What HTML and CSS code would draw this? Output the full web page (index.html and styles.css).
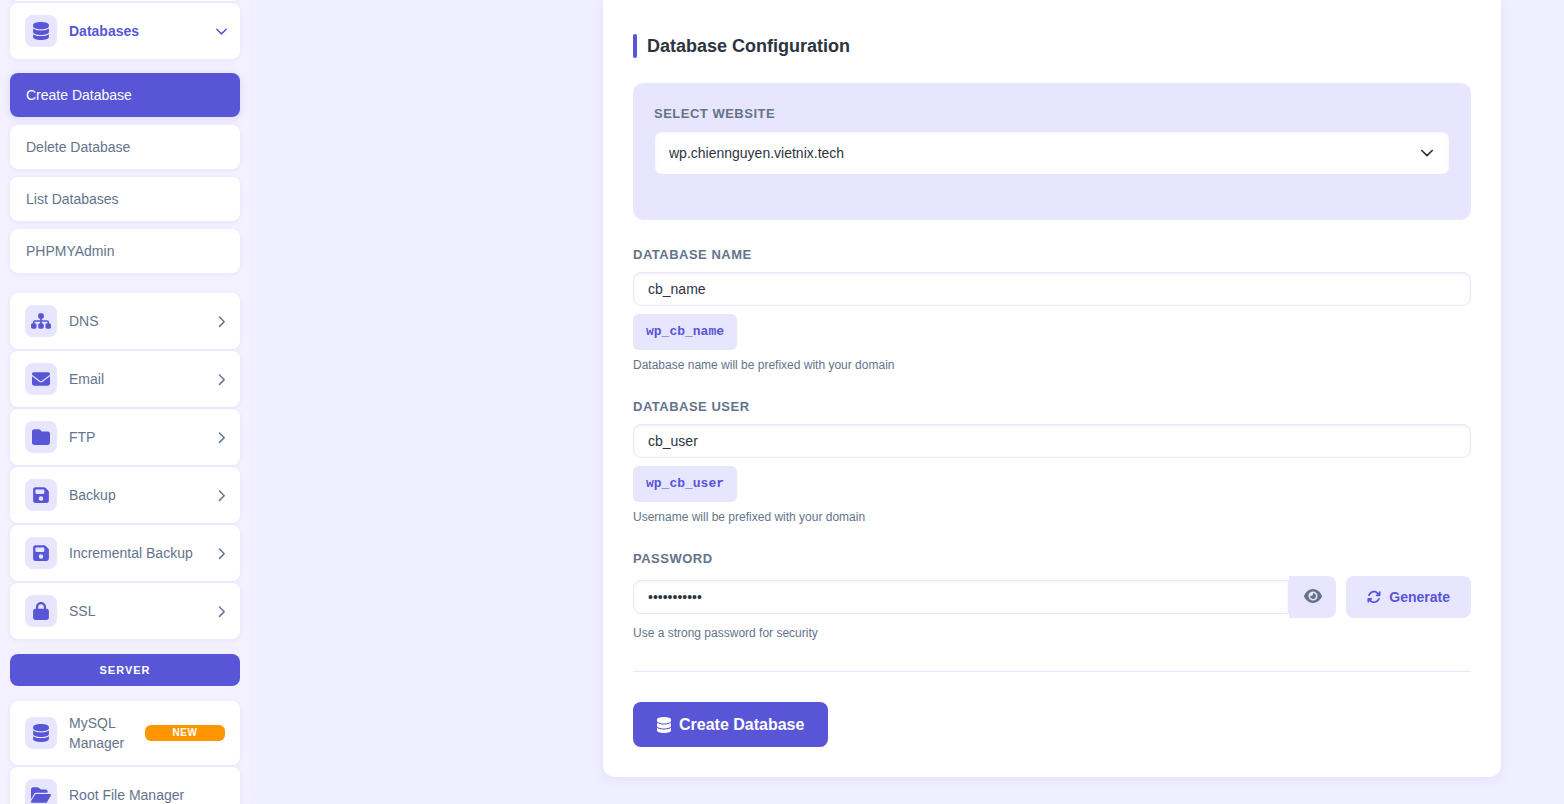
FILE: index.html
```html
<!DOCTYPE html>
<html lang="en">
<head>
<meta charset="utf-8">
<title>Create Database</title>
<link rel="stylesheet" href="styles.css">
</head>
<body>
<svg class="sprite" aria-hidden="true">
  <symbol id="database" viewBox="0 0 448 512"><path d="M448 80v48c0 44.200-100.300 80-224 80S0 172.200 0 128V80C0 35.800 100.300 0 224 0S448 35.800 448 80zM393.200 214.700c20.800-7.400 39.900-16.900 54.800-28.600V288c0 44.200-100.300 80-224 80S0 332.200 0 288V186.100c14.900 11.800 34 21.200 54.800 28.600C99.700 230.700 159.500 240 224 240s124.300-9.300 169.200-25.300zM0 346.100c14.900 11.800 34 21.200 54.800 28.600C99.700 390.700 159.500 400 224 400s124.300-9.300 169.200-25.300c20.800-7.400 39.900-16.900 54.800-28.600V432c0 44.200-100.300 80-224 80S0 476.200 0 432V346.100z"/></symbol>
  <symbol id="sitemap" viewBox="0 0 576 512"><path d="M208 80c0-26.500 21.500-48 48-48h64c26.500 0 48 21.500 48 48v64c0 26.500-21.500 48-48 48h-8v40H464c30.900 0 56 25.100 56 56v32h8c26.500 0 48 21.500 48 48v64c0 26.500-21.500 48-48 48H464c-26.500 0-48-21.500-48-48V368c0-26.500 21.500-48 48-48h8V288c0-4.400-3.600-8-8-8H312v40h8c26.500 0 48 21.500 48 48v64c0 26.500-21.500 48-48 48H256c-26.500 0-48-21.500-48-48V368c0-26.500 21.500-48 48-48h8V280H112c-4.400 0-8 3.600-8 8v32h8c26.500 0 48 21.500 48 48v64c0 26.500-21.500 48-48 48H48c-26.500 0-48-21.500-48-48V368c0-26.500 21.500-48 48-48h8V288c0-30.900 25.100-56 56-56H264V192h-8c-26.500 0-48-21.500-48-48V80z"/></symbol>
  <symbol id="envelope" viewBox="0 0 512 512"><path d="M48 64C21.500 64 0 85.500 0 112c0 15.100 7.100 29.300 19.200 38.400L236.800 313.600c11.400 8.500 27 8.500 38.400 0L492.800 150.400c12.100-9.100 19.200-23.300 19.200-38.400c0-26.500-21.500-48-48-48H48zM0 176V384c0 35.300 28.700 64 64 64H448c35.300 0 64-28.700 64-64V176L294.400 339.200c-22.800 17.100-54 17.100-76.800 0L0 176z"/></symbol>
  <symbol id="folder" viewBox="0 0 512 512"><path d="M64 480H448c35.300 0 64-28.700 64-64V160c0-35.300-28.700-64-64-64H288c-10.100 0-19.600-4.700-25.600-12.800L243.200 57.600C231.100 41.500 212.100 32 192 32H64C28.700 32 0 60.700 0 96V416c0 35.300 28.700 64 64 64z"/></symbol>
  <symbol id="floppy" viewBox="0 0 448 512"><path d="M64 32C28.700 32 0 60.700 0 96V416c0 35.300 28.700 64 64 64H384c35.300 0 64-28.700 64-64V173.300c0-17-6.700-33.300-18.700-45.300L352 50.700C340 38.700 323.700 32 306.700 32H64zm0 96c0-17.700 14.300-32 32-32H288c17.700 0 32 14.300 32 32v64c0 17.700-14.300 32-32 32H96c-17.700 0-32-14.300-32-32V128zM224 288a64 64 0 1 1 0 128 64 64 0 1 1 0-128z"/></symbol>
  <symbol id="lock" viewBox="0 0 448 512"><path d="M144 144v48H304V144c0-44.200-35.800-80-80-80s-80 35.800-80 80zM80 192V144C80 64.500 144.500 0 224 0s144 64.500 144 144v48h16c35.300 0 64 28.700 64 64V448c0 35.300-28.700 64-64 64H64c-35.300 0-64-28.700-64-64V256c0-35.300 28.700-64 64-64H80z"/></symbol>
  <symbol id="folder-open" viewBox="0 0 576 512"><path d="M88.700 223.800L0 375.800V96C0 60.700 28.700 32 64 32H181.500c17 0 33.300 6.700 45.300 18.700l26.500 26.500c12 12 28.300 18.700 45.300 18.700H416c35.300 0 64 28.700 64 64v32H144c-22.800 0-43.800 12.100-55.300 31.800zm27.600 16.100C122.100 230 132.600 224 144 224H544c11.500 0 22 6.100 27.700 16.100s5.700 22.200-.1 32.100l-112 192C453.900 474 443.400 480 432 480H32c-11.500 0-22-6.100-27.700-16.100s-5.700-22.200 .1-32.100l112-192z"/></symbol>
  <symbol id="eye" viewBox="0 0 576 512"><path d="M288 32c-80.800 0-145.500 36.800-192.600 80.600C48.600 156 17.300 208 2.500 243.700c-3.300 7.900-3.300 16.700 0 24.600C17.300 304 48.600 356 95.400 399.400C142.500 443.200 207.200 480 288 480s145.500-36.800 192.600-80.600c46.800-43.500 78.100-95.400 93-131.100c3.300-7.900 3.300-16.700 0-24.600c-14.900-35.700-46.200-87.700-93-131.100C433.500 68.800 368.800 32 288 32zM144 256a144 144 0 1 1 288 0 144 144 0 1 1 -288 0zm144-64c0 35.300-28.700 64-64 64c-7.100 0-13.900-1.200-20.300-3.300c-5.500-1.800-11.900 1.600-11.700 7.400c.3 6.900 1.300 13.800 3.200 20.700c13.700 51.200 66.400 81.600 117.600 67.900s81.600-66.400 67.900-117.600c-11.100-41.500-47.800-69.400-88.600-71.100c-5.800-.2-9.200 6.100-7.400 11.700c2.100 6.400 3.300 13.200 3.300 20.300z"/></symbol>
  <symbol id="rotate" viewBox="0 0 512 512"><path d="M105.100 202.600c7.700-21.800 20.200-42.300 37.800-59.800c62.500-62.500 163.800-62.500 226.300 0L386.300 160H352c-17.700 0-32 14.300-32 32s14.300 32 32 32H463.500c0 0 0 0 0 0h.4c17.700 0 32-14.300 32-32V80c0-17.700-14.300-32-32-32s-32 14.300-32 32v35.200L414.400 97.600c-87.500-87.500-229.300-87.500-316.800 0C73.200 122 55.600 150.700 44.800 181.400c-5.900 16.700 2.900 34.900 19.500 40.800s34.900-2.900 40.800-19.500zM39 289.300c-5 1.500-9.800 4.200-13.700 8.200c-4 4-6.700 8.800-8.100 14c-.3 1.200-.6 2.500-.8 3.800c-.3 1.700-.4 3.400-.4 5.100V432c0 17.700 14.300 32 32 32s32-14.300 32-32V396.900l17.600 17.500c87.500 87.400 229.300 87.400 316.700 0c24.400-24.400 42.100-53.100 52.900-83.700c5.900-16.700-2.900-34.900-19.500-40.800s-34.900 2.900-40.800 19.500c-7.700 21.800-20.200 42.300-37.800 59.800c-62.500 62.500-163.800 62.500-226.300 0l-.1-.1L125.600 352H160c17.700 0 32-14.300 32-32s-14.300-32-32-32H48.400c-1.600 0-3.200 .1-4.800 .3s-3.100 .5-4.600 1z"/></symbol>
  <symbol id="chevron-right" viewBox="0 0 16 16"><path d="M6.500 4l4.700 4.700-4.700 4.700" fill="none" stroke="currentColor" stroke-width="1.500" stroke-linecap="round" stroke-linejoin="round"/></symbol>
  <symbol id="chevron-down" viewBox="0 0 16 16"><path d="M3.800 6.200l4.700 4.700 4.700-4.700" fill="none" stroke="currentColor" stroke-width="1.500" stroke-linecap="round" stroke-linejoin="round"/></symbol>
  <symbol id="select-chevron" viewBox="0 0 16 16"><path d="M2.800 5.500l5.200 5.200 5.200-5.200" fill="none" stroke="currentColor" stroke-width="1.700" stroke-linecap="round" stroke-linejoin="round"/></symbol>
</svg>

<div class="layout">
  <aside class="sidebar">
    <nav class="menu">
      <div class="item"></div>
      <a class="item item-open" href="#"><span class="icon-box"><svg class="icon"><use href="#database"/></svg></span><span class="item-text">Databases</span><svg class="chevron"><use href="#chevron-down"/></svg></a>
      <div class="submenu">
        <a class="sub active" href="#">Create Database</a>
        <a class="sub" href="#">Delete Database</a>
        <a class="sub" href="#">List Databases</a>
        <a class="sub" href="#">PHPMYAdmin</a>
      </div>
      <a class="item" href="#"><span class="icon-box"><svg class="icon"><use href="#sitemap"/></svg></span><span class="item-text">DNS</span><svg class="chevron"><use href="#chevron-right"/></svg></a>
      <a class="item" href="#"><span class="icon-box"><svg class="icon"><use href="#envelope"/></svg></span><span class="item-text">Email</span><svg class="chevron"><use href="#chevron-right"/></svg></a>
      <a class="item" href="#"><span class="icon-box"><svg class="icon"><use href="#folder"/></svg></span><span class="item-text">FTP</span><svg class="chevron"><use href="#chevron-right"/></svg></a>
      <a class="item" href="#"><span class="icon-box"><svg class="icon"><use href="#floppy"/></svg></span><span class="item-text">Backup</span><svg class="chevron"><use href="#chevron-right"/></svg></a>
      <a class="item" href="#"><span class="icon-box"><svg class="icon"><use href="#floppy"/></svg></span><span class="item-text">Incremental Backup</span><svg class="chevron"><use href="#chevron-right"/></svg></a>
      <a class="item" href="#"><span class="icon-box"><svg class="icon"><use href="#lock"/></svg></span><span class="item-text">SSL</span><svg class="chevron"><use href="#chevron-right"/></svg></a>
      <div class="menu-title">Server</div>
      <a class="item" href="#"><span class="icon-box"><svg class="icon"><use href="#database"/></svg></span><span class="item-text">MySQL Manager</span><span class="badge">NEW</span></a>
      <a class="item" href="#"><span class="icon-box"><svg class="icon"><use href="#folder-open"/></svg></span><span class="item-text">Root File Manager</span></a>
    </nav>
  </aside>

  <main class="main">
    <form class="card">
      <h2 class="heading">Database Configuration</h2>

      <div class="site-box">
        <label class="label" for="site">Select Website</label>
        <div class="select-wrap">
          <select class="field select" id="site"><option>wp.chiennguyen.vietnix.tech</option></select>
          <svg class="select-arrow"><use href="#select-chevron"/></svg>
        </div>
      </div>

      <div class="group">
        <label class="label" for="db-name">Database Name</label>
        <input class="field" id="db-name" type="text" value="cb_name">
        <div class="preview">wp_cb_name</div>
        <p class="hint">Database name will be prefixed with your domain</p>
      </div>

      <div class="group">
        <label class="label" for="db-user">Database User</label>
        <input class="field" id="db-user" type="text" value="cb_user">
        <div class="preview">wp_cb_user</div>
        <p class="hint">Username will be prefixed with your domain</p>
      </div>

      <div class="group">
        <label class="label" for="password">Password</label>
        <div class="password-row">
          <input class="field password" id="password" type="password" value="abcdefghijk">
          <button class="eye" type="button" aria-label="Show password"><svg class="eye-icon"><use href="#eye"/></svg></button>
          <button class="generate" type="button"><svg class="generate-icon"><use href="#rotate"/></svg>Generate</button>
        </div>
        <p class="hint">Use a strong password for security</p>
      </div>

      <div class="actions">
        <button class="submit" type="submit"><svg class="submit-icon"><use href="#database"/></svg>Create Database</button>
      </div>
    </form>
  </main>
</div>
</body>
</html>
```

FILE: styles.css
```css
:root {
  --primary: #5856d6;
  --soft: #e8e5ff;
  --muted: #64748b;
  --dark: #2d3440;
}

* { box-sizing: border-box; }

body {
  margin: 0;
  background: #f0efff;
  color: var(--dark);
  font: 14px/20px "Liberation Sans", Arial, sans-serif;
}

button, input, select { font: inherit; }
svg { fill: currentColor; flex: none; }
.sprite { display: none; }

.layout {
  display: flex;
  height: 100vh;
  overflow: hidden;
}

/* Sidebar */
.sidebar {
  flex: none;
  width: 250px;
  padding: 0 10px;
  background: #f3f0ff;
  box-shadow: 0 0 10px #f3f0ff;
}

.menu {
  display: flex;
  flex-direction: column;
  gap: 2px;
  margin-top: -55px;
}

.item {
  display: flex;
  align-items: center;
  gap: 12px;
  min-height: 56px;
  padding: 12px 15px;
  border-radius: 8px;
  background: #fff;
  box-shadow: 0 1px 4px rgba(88, 86, 214, 0.08);
  color: var(--muted);
  text-decoration: none;
}

.item-open {
  color: var(--primary);
  font-weight: bold;
}

.icon-box {
  display: flex;
  flex: none;
  align-items: center;
  justify-content: center;
  width: 32px;
  height: 32px;
  border-radius: 8px;
  background: var(--soft);
  color: var(--primary);
}

.icon { width: 20px; height: 18px; }
.item-text { flex: 1; }

.chevron {
  width: 16px;
  height: 16px;
  margin-right: -4px;
}

.submenu {
  display: flex;
  flex-direction: column;
  gap: 8px;
  margin: 12px 0 18px;
}

.sub {
  padding: 12px 16px;
  border-radius: 8px;
  background: #fff;
  box-shadow: 0 1px 4px rgba(88, 86, 214, 0.08);
  color: var(--muted);
  text-decoration: none;
}

.sub.active {
  background: var(--primary);
  box-shadow: 0 2px 8px rgba(88, 86, 214, 0.15);
  color: #fff;
}

.menu-title {
  margin: 13px 0;
  padding: 6px;
  border-radius: 8px;
  background: var(--primary);
  color: #fff;
  font-size: 11px;
  font-weight: bold;
  letter-spacing: 1px;
  text-align: center;
  text-transform: uppercase;
}

.badge {
  flex: none;
  width: 80px;
  margin-left: -12px;
  border-radius: 6px;
  background: #ff9500;
  color: #fff;
  font-size: 10px;
  font-weight: bold;
  letter-spacing: 0.5px;
  line-height: 16px;
  text-align: center;
}

/* Form card */
.main {
  flex: 1;
  min-width: 0;
  padding: 0 63px;
}

.card {
  max-width: 898px;
  margin-left: auto;
  padding: 34px 30px 30px;
  border-radius: 0 0 12px 12px;
  background: #fff;
  box-shadow: 0 2px 12px rgba(88, 86, 214, 0.1);
}

.heading {
  display: flex;
  gap: 10px;
  margin: 0 0 25px;
  font-size: 18px;
  line-height: 24px;
}

.heading::before {
  content: "";
  width: 4px;
  border-radius: 2px;
  background: var(--primary);
}

.site-box {
  margin-bottom: 25px;
  padding: 21px 21px 45px;
  border-radius: 10px;
  background: var(--soft);
}

.group { margin-top: 23px; }

.label {
  display: block;
  margin-bottom: 8px;
  color: var(--muted);
  font-size: 13px;
  font-weight: bold;
  letter-spacing: 0.5px;
  line-height: 19px;
  text-transform: uppercase;
}

.field {
  display: block;
  width: 100%;
  height: 34px;
  padding: 0 14px;
  border: 1px solid var(--soft);
  border-radius: 8px;
  outline: none;
  background: #fff;
  box-shadow: inset 0 1px 3px rgba(0, 0, 0, 0.06);
  color: var(--dark);
}

.select-wrap { position: relative; }

.select {
  height: 44px;
  appearance: none;
}

.select-arrow {
  position: absolute;
  top: 14px;
  right: 15px;
  width: 16px;
  height: 16px;
  pointer-events: none;
}

.preview {
  width: fit-content;
  margin-top: 8px;
  padding: 9px 13px;
  border-radius: 6px;
  background: var(--soft);
  color: var(--primary);
  font: bold 13px/18px "Liberation Mono", monospace;
}

.hint {
  margin: 6px 0 0;
  color: var(--muted);
  font-size: 12px;
  line-height: 18px;
}

.password-row {
  display: flex;
  align-items: center;
}

.password {
  flex: 1;
  min-width: 0;
  border-radius: 8px 0 0 8px;
}

.eye {
  display: flex;
  align-items: center;
  justify-content: center;
  width: 47px;
  height: 42px;
  padding: 0 0 2px;
  border: 0;
  border-radius: 0 8px 8px 0;
  background: var(--soft);
  color: var(--muted);
}

.eye-icon { width: 18px; height: 16px; }

.generate {
  display: flex;
  align-items: center;
  gap: 8px;
  height: 42px;
  margin-left: 10px;
  padding: 0 21px;
  border: 0;
  border-radius: 8px;
  background: var(--soft);
  color: var(--primary);
  font-weight: bold;
}

.generate-icon { width: 14px; height: 14px; }

.actions {
  margin-top: 29px;
  padding-top: 30px;
  border-top: 1px solid var(--soft);
}

.submit {
  display: flex;
  align-items: center;
  gap: 8px;
  height: 45px;
  padding: 0 24px;
  border: 0;
  border-radius: 8px;
  background: var(--primary);
  color: #fff;
  font-size: 16px;
  font-weight: bold;
}

.submit-icon { width: 14px; height: 16px; }
```
